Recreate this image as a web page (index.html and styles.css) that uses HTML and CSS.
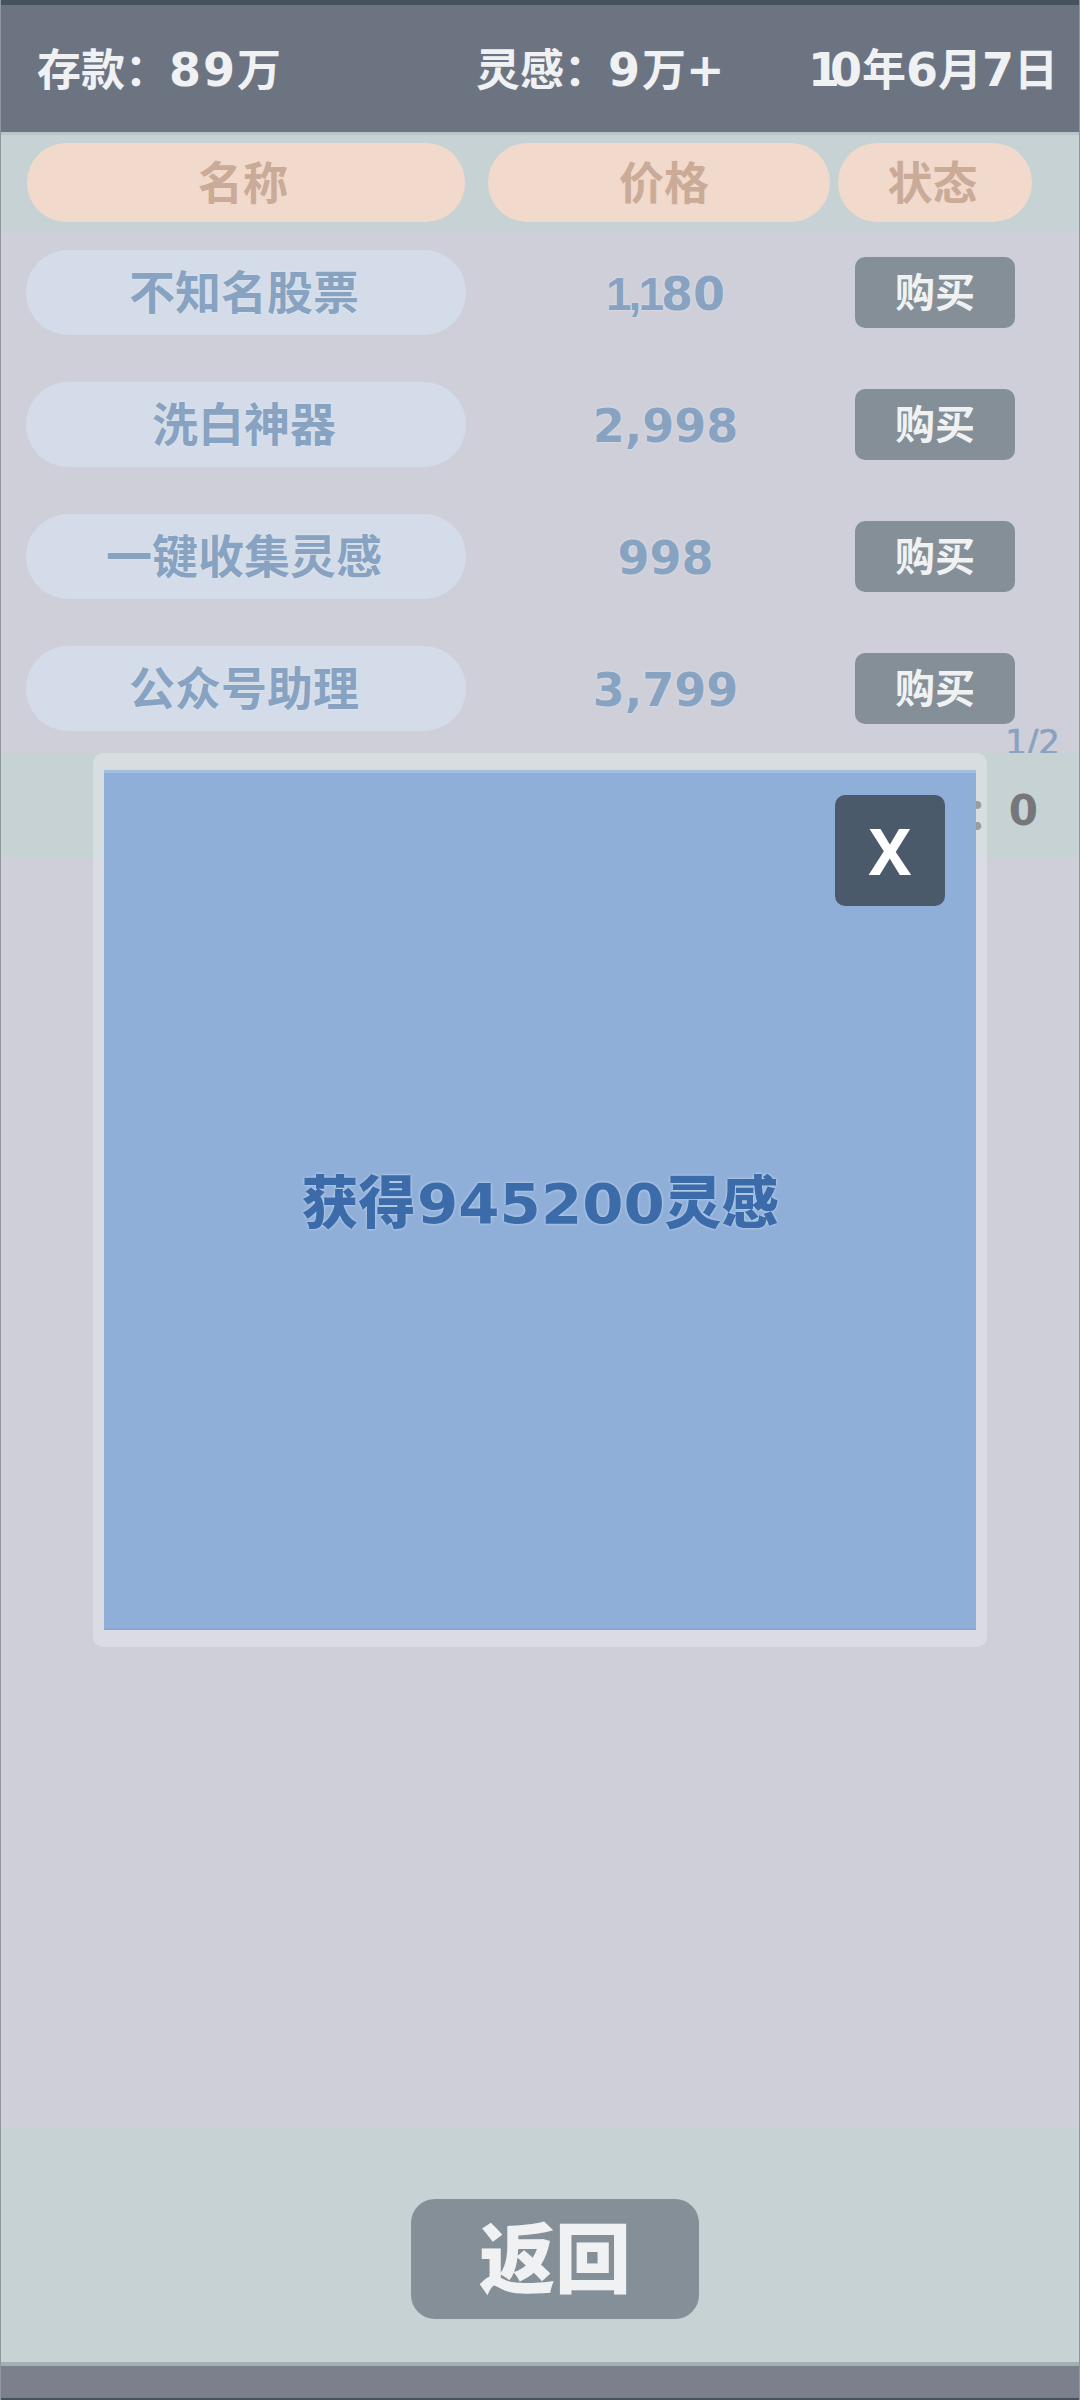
FILE: index.html
```html
<!DOCTYPE html>
<html lang="zh">
<head>
<meta charset="utf-8">
<title>商店</title>
<link rel="stylesheet" href="styles.css">
</head>
<body>
<div class="page">
  <header class="topbar">
    <span class="stat stat-money">存款：<span class="num">89</span>万</span>
    <span class="stat stat-idea">灵感：<span class="num">9</span>万<span class="num">+</span></span>
    <span class="stat stat-date"><span class="num"><span class="tight">1</span>0</span>年<span class="num">6</span>月<span class="num">7</span>日</span>
  </header>
  <div class="thead">
    <div class="th th-name">名称</div>
    <div class="th th-price">价格</div>
    <div class="th th-state">状态</div>
  </div>
  <section class="list">
    <div class="row"><div class="name">不知名股票</div><div class="price"><span class="ones">1,1</span>80</div><div class="buy">购买</div></div>
    <div class="row"><div class="name">洗白神器</div><div class="price">2,998</div><div class="buy">购买</div></div>
    <div class="row"><div class="name">一键收集灵感</div><div class="price">998</div><div class="buy">购买</div></div>
    <div class="row"><div class="name">公众号助理</div><div class="price">3,799</div><div class="buy">购买</div></div>
    <div class="pager">1/2</div>
  </section>
  <div class="holding"><span class="colon">：</span><span class="count">0</span></div>
  <main class="blank"></main>
  <footer class="foot"><div class="back">返回</div></footer>
  <div class="navbar"></div>

  <div class="modal">
    <div class="modal-panel">
      <div class="close">X</div>
      <div class="message">获得<span class="wide">945200</span>灵感</div>
    </div>
  </div>
</div>
</body>
</html>
```
FILE: styles.css
```css
* { box-sizing: border-box; }
html, body { margin: 0; padding: 0; }
body { font-family: "Noto Sans CJK SC", "Noto Sans", sans-serif; font-weight: 700; }

.page {
  position: relative;
  width: 1080px;
  height: 2400px;
  display: flex;
  flex-direction: column;
  background: #cecfd9;
  overflow: hidden;
}
.page::after {
  content: "";
  position: absolute;
  inset: 0;
  border-left: 1px solid #8f969e;
  border-right: 1px solid #8f969e;
  pointer-events: none;
}

.num { font-family: "DejaVu Sans", sans-serif; font-size: 46px; font-weight: 700; letter-spacing: 2px; }
.tight { letter-spacing: -10px; }
.stat-date .num { letter-spacing: 0; }
.stat-date .tight { letter-spacing: -10px; }

.topbar {
  height: 135px;
  flex: none;
  display: flex;
  align-items: center;
  background: #6c7482;
  border-top: 5px solid #46535f;
  border-bottom: 3px solid #b9c6c8;
  color: #f0f1f3;
  font-size: 44px;
  line-height: 1;
}
.stat { white-space: nowrap; }
.stat-money { margin-left: 37px; width: 439px; }
.stat-idea { width: 332px; }

.thead {
  height: 97px;
  flex: none;
  display: flex;
  padding: 8px 0 0 27px;
  background: #c6d2d3;
}
.th {
  height: 79px;
  padding-bottom: 5px;
  border-radius: 39px;
  background: #f1d9cc;
  color: #c9ab97;
  font-size: 45px;
  display: flex;
  align-items: center;
  justify-content: center;
}
.th-name { width: 438px; padding-right: 6px; }
.th-price { width: 342px; margin-left: 23px; padding-left: 10px; }
.th-state { width: 194px; margin-left: 8px; padding-right: 5px; }

.list {
  height: 521px;
  flex: none;
  overflow: hidden;
  padding: 18px 20px 0 26px;
}
.row {
  display: grid;
  grid-template-columns: 440px 389px 160px;
  align-items: center;
  height: 85px;
  margin-bottom: 47px;
}
.name {
  height: 85px;
  padding: 0 4px 7px 0;
  border-radius: 42px;
  background: #d3dce8;
  color: #88a2c1;
  font-size: 46px;
  display: flex;
  align-items: center;
  justify-content: center;
  text-shadow: 0 0 2px #e6edf4;
}
.price {
  padding: 3px 0 0 10px;
  text-align: center;
  color: #88a2c1;
  font-family: "DejaVu Sans", sans-serif;
  font-size: 46px;
  line-height: 1;
  text-shadow: 0 0 2px #e6edf4;
}
.ones { font-family: "Liberation Sans", sans-serif; letter-spacing: -3px; }
.buy {
  height: 71px;
  padding-bottom: 5px;
  border-radius: 10px;
  background: #858f98;
  color: #f0f1f3;
  font-size: 40px;
  display: flex;
  align-items: center;
  justify-content: center;
}
.pager {
  margin-top: -54px;
  text-align: right;
  color: #88a2c1;
  font-family: "DejaVu Sans", sans-serif;
  font-weight: 400;
  font-size: 34px;
  line-height: 36px;
  -webkit-text-stroke: 0.6px #88a2c1;
}

.holding {
  height: 104px;
  flex: none;
  display: flex;
  align-items: center;
  justify-content: flex-end;
  padding: 10px 42px 0 0;
  background: #c6d2d3;
  color: #75777a;
  font-family: "DejaVu Sans", sans-serif;
  font-size: 42px;
}
.colon { font-family: "Noto Sans CJK SC", sans-serif; }

.blank { flex: 1; }

.foot {
  height: 238px;
  flex: none;
  display: flex;
  justify-content: center;
  padding: 71px 0 0 30px;
  background: #c6d2d3;
  border-bottom: 4px solid #a4afb2;
}
.back {
  width: 288px;
  height: 120px;
  padding-bottom: 10px;
  border-radius: 24px;
  background: #858f98;
  color: #f0f1f3;
  font-size: 76px;
  font-weight: 900;
  display: flex;
  align-items: center;
  justify-content: center;
}
.navbar {
  height: 34px;
  flex: none;
  background: #7b808c;
  border-bottom: 2px solid #46535f;
}

.modal {
  position: absolute;
  left: 93px;
  top: 753px;
  width: 894px;
  height: 894px;
  padding: 17px 11px;
  border-radius: 10px;
  background: rgba(255, 255, 255, 0.28);
}
.modal-panel {
  position: relative;
  height: 100%;
  background: #8faed8;
  border-top: 3px solid #a0bfe0;
  border-bottom: 2px solid #89a6d6;
  display: flex;
  align-items: center;
  justify-content: center;
}
.close {
  position: absolute;
  right: 31px;
  top: 22px;
  width: 110px;
  height: 111px;
  border-radius: 10px;
  background: #4a5a6a;
  color: #fff;
  font-family: "Noto Sans", sans-serif;
  font-size: 64px;
  display: flex;
  align-items: center;
  justify-content: center;
}
.message {
  color: #3b6ba9;
  font-size: 57px;
  font-weight: 900;
  line-height: 1;
  white-space: nowrap;
  text-shadow: 0 0 3px #cfe0f2;
}
.wide {
  display: inline-block;
  margin: 0 7px 0 8px;
  font-family: "DejaVu Sans", sans-serif;
  font-size: 56px;
  font-weight: 700;
  transform: scaleX(1.06);
}
```
